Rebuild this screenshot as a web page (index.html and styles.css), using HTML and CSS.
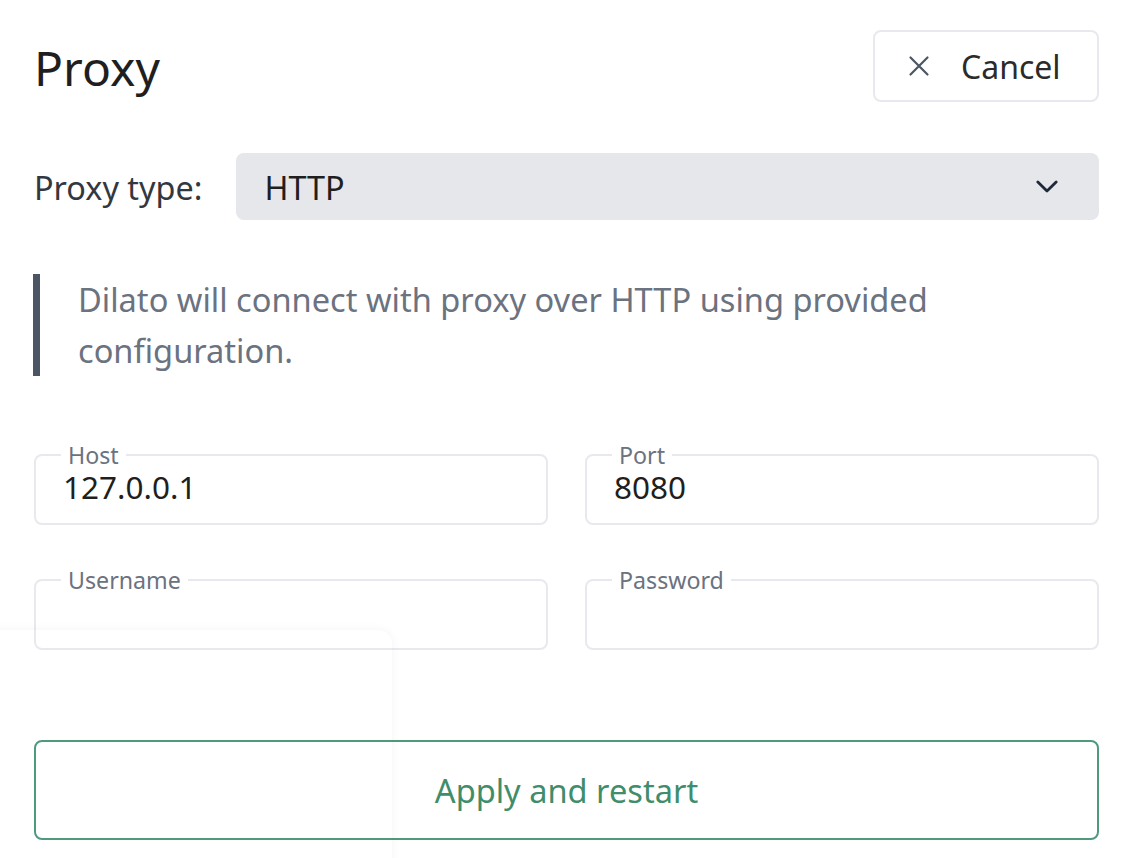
FILE: index.html
```html
<!DOCTYPE html>
<html>
<head>
<meta charset="utf-8">
<link rel="stylesheet" href="styles.css">
</head>
<body>
<main class="page">
  <header class="header">
    <h1 class="title">Proxy</h1>
    <button class="cancel-btn">
      <svg class="cancel-icon" viewBox="0 0 24 24" width="24" height="24"><path d="M3.5 3.5 L20.5 20.5 M20.5 3.5 L3.5 20.5" stroke="#4b5563" stroke-width="2.2" stroke-linecap="round" fill="none"/></svg>
      <span>Cancel</span>
    </button>
  </header>

  <div class="type-row">
    <label class="type-label">Proxy type:</label>
    <div class="select">
      <span>HTTP</span>
      <svg class="chevron" viewBox="0 0 24 14" width="24" height="14"><path d="M2 2 L12 12 L22 2" stroke="#1f2937" stroke-width="3" fill="none" stroke-linecap="round" stroke-linejoin="round"/></svg>
    </div>
  </div>

  <blockquote class="note">Dilato will connect with proxy over HTTP using provided configuration.</blockquote>

  <div class="fields">
    <fieldset class="field"><legend>Host</legend><input class="field-input" value="127.0.0.1"></fieldset>
    <fieldset class="field"><legend>Port</legend><input class="field-input" value="8080"></fieldset>
    <fieldset class="field"><legend>Username</legend><input class="field-input" value=""></fieldset>
    <fieldset class="field"><legend>Password</legend><input class="field-input" type="password" value=""></fieldset>
  </div>

  <button class="apply-btn">Apply and restart</button>
</main>
<div class="ghost-clip"><div class="ghost-panel"></div></div>
</body>
</html>
```
FILE: styles.css
```css
* { box-sizing: border-box; }
html, body { margin: 0; padding: 0; background: #ffffff; }
body {
  font-family: "Noto Sans", "Open Sans", sans-serif;
  color: #1f2937;
  width: 1140px;
  height: 858px;
  overflow: hidden;
  position: relative;
}
.page {
  padding: 30px 41px 0 34px;
}
.header {
  display: flex;
  justify-content: space-between;
  align-items: center;
  height: 72px;
}
.title {
  margin: 0;
  font-size: 48px;
  font-weight: 400;
  color: #1f1f1f;
  line-height: 1;
  padding-top: 4px;
}
.cancel-btn {
  width: 226px;
  height: 72px;
  border: 2px solid #e8e9ee;
  border-radius: 8px;
  background: #fff;
  display: flex;
  align-items: center;
  padding: 0 0 0 32px;
  font-family: inherit;
  font-size: 32px;
  color: #2b2b2b;
  gap: 30px;
}
.cancel-icon { width: 24px; height: 24px; }
.type-row {
  margin-top: 51px;
  display: flex;
  align-items: center;
  gap: 34px;
}
.type-label {
  font-size: 32.4px;
  color: #333840;
}
.select {
  flex: 1;
  height: 67px;
  background: #e5e7eb;
  border-radius: 8px;
  display: flex;
  align-items: center;
  justify-content: space-between;
  padding: 0 41px 0 28px;
  font-size: 32.4px;
  color: #1f1f1f;
}
.chevron { width: 22px; height: 13px; }
.note {
  margin: 54px 0 0 -1px;
  border-left: 7px solid #4b5563;
  padding: 0 0 0 38px;
  font-size: 32.6px;
  line-height: 51px;
  color: #6b7280;
  height: 102px;
}
.fields {
  margin-top: 67px;
  display: grid;
  grid-template-columns: 1fr 1fr;
  column-gap: 37px;
  row-gap: 43px;
}
.field {
  margin: 0;
  border: 2px solid #e8e9ee;
  border-radius: 8px;
  padding: 0 20px 0 27px;
  height: 82px;
  min-width: 0;
}
.field legend {
  font-size: 23.2px;
  line-height: 24px;
  color: #6b7280;
  padding: 0 7px;
  margin-left: -2px;
}
.field-input {
  display: block;
  width: 100%;
  border: 0;
  outline: none;
  background: transparent;
  font-family: inherit;
  font-size: 31.5px;
  color: #1f1f1f;
  padding: 0;
  height: 40px;
  line-height: 40px;
  margin-top: 0px;
}
.apply-btn {
  margin-top: 90px;
  width: 100%;
  height: 100px;
  border: 2px solid #4f9a7d;
  border-radius: 8px;
  background: #fff;
  font-family: inherit;
  font-size: 32.6px;
  color: #3f8d6b;
}
.ghost-clip {
  position: absolute;
  left: 0;
  top: 0;
  width: 1140px;
  height: 858px;
  overflow: hidden;
  pointer-events: none;
}
.ghost-panel {
  position: absolute;
  left: -20px;
  top: 630px;
  width: 412px;
  height: 300px;
  border-radius: 14px;
  background: transparent;
  box-shadow: 0 0 10px rgba(0, 0, 0, 0.05);
}
```
